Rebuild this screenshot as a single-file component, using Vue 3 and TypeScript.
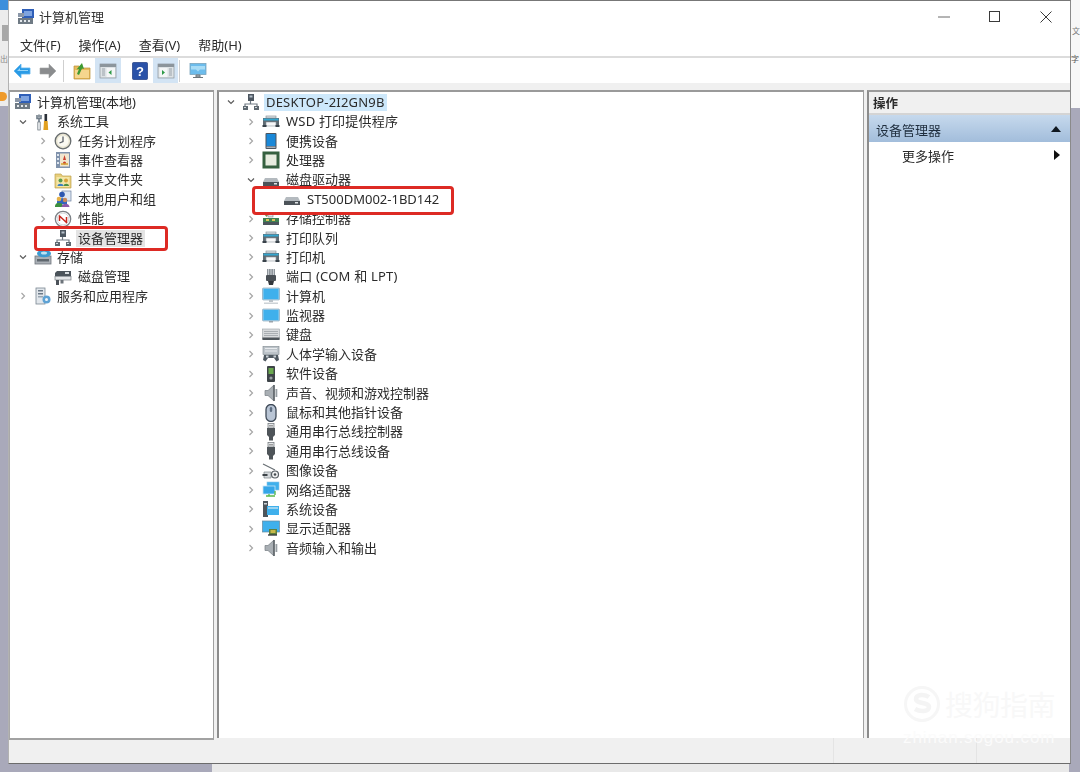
<script setup lang="ts">
interface Row { label: string; icon?: string; depth: number; caret?: 'right' | 'down' | 'none'; sel?: boolean }

const menus: string[] = ['文件(F)', '操作(A)', '查看(V)', '帮助(H)']

const isLatin = (s: string): boolean => /[A-Za-z]{3}/.test(s)

const leftRows: Row[] = [
  { label: '计算机管理(本地)', icon: 'mgmt', depth: 0, caret: 'none' },
  { label: '系统工具', icon: 'tools', depth: 1, caret: 'down' },
  { label: '任务计划程序', icon: 'clock', depth: 2, caret: 'right' },
  { label: '事件查看器', icon: 'event', depth: 2, caret: 'right' },
  { label: '共享文件夹', icon: 'share', depth: 2, caret: 'right' },
  { label: '本地用户和组', icon: 'users', depth: 2, caret: 'right' },
  { label: '性能', icon: 'perf', depth: 2, caret: 'right' },
  { label: '设备管理器', icon: 'devmgr', depth: 2, caret: 'none', sel: true },
  { label: '存储', icon: 'storage', depth: 1, caret: 'down' },
  { label: '磁盘管理', icon: 'diskmgr', depth: 2, caret: 'none' },
  { label: '服务和应用程序', icon: 'services', depth: 1, caret: 'right' },
]

const centerRows: Row[] = [
  { label: 'DESKTOP-2I2GN9B', icon: 'devmgr', depth: 0, caret: 'down', sel: true },
  { label: 'WSD 打印提供程序', icon: 'printer', depth: 1, caret: 'right' },
  { label: '便携设备', icon: 'portable', depth: 1, caret: 'right' },
  { label: '处理器', icon: 'cpu', depth: 1, caret: 'right' },
  { label: '磁盘驱动器', icon: 'drive', depth: 1, caret: 'down' },
  { label: 'ST500DM002-1BD142', icon: 'drive', depth: 2, caret: 'none' },
  { label: '存储控制器', icon: 'storctl', depth: 1, caret: 'right' },
  { label: '打印队列', icon: 'printer', depth: 1, caret: 'right' },
  { label: '打印机', icon: 'printer', depth: 1, caret: 'right' },
  { label: '端口 (COM 和 LPT)', icon: 'port', depth: 1, caret: 'right' },
  { label: '计算机', icon: 'computer', depth: 1, caret: 'right' },
  { label: '监视器', icon: 'monitor', depth: 1, caret: 'right' },
  { label: '键盘', icon: 'keyboard', depth: 1, caret: 'right' },
  { label: '人体学输入设备', icon: 'hid', depth: 1, caret: 'right' },
  { label: '软件设备', icon: 'software', depth: 1, caret: 'right' },
  { label: '声音、视频和游戏控制器', icon: 'sound', depth: 1, caret: 'right' },
  { label: '鼠标和其他指针设备', icon: 'mouse', depth: 1, caret: 'right' },
  { label: '通用串行总线控制器', icon: 'usb', depth: 1, caret: 'right' },
  { label: '通用串行总线设备', icon: 'usb', depth: 1, caret: 'right' },
  { label: '图像设备', icon: 'camera', depth: 1, caret: 'right' },
  { label: '网络适配器', icon: 'network', depth: 1, caret: 'right' },
  { label: '系统设备', icon: 'system', depth: 1, caret: 'right' },
  { label: '显示适配器', icon: 'display', depth: 1, caret: 'right' },
  { label: '音频输入和输出', icon: 'sound', depth: 1, caret: 'right' },
]
</script>

<template>
  <div class="screen">
    <div class="back-blue"></div>
    <div class="back-left"></div>
    <div class="back-right"></div>
    <div class="back-bottom"></div>
    <span class="back-orange"></span>
    <span class="back-grip"></span>
    <span class="back-t1">出</span>
    <span class="back-t2">文</span>
    <span class="back-t3">字</span>

    <svg class="defs" aria-hidden="true">
      <symbol id="mgmt" viewBox="0 0 18 18">
        <rect x="5" y="1" width="12" height="9" fill="#2f5fb8" />
        <rect x="7" y="3" width="8" height="5" fill="#7fa4e0" />
        <rect x="1" y="5" width="6" height="4" fill="#8b97a8" />
        <rect x="1" y="10" width="15" height="6" fill="#6f7a84" />
        <rect x="3" y="12" width="2" height="2" fill="#e4e8ec" />
        <rect x="7" y="12" width="2" height="2" fill="#e4e8ec" />
        <rect x="11" y="12" width="2" height="2" fill="#e4e8ec" />
      </symbol>
      <symbol id="tools" viewBox="0 0 18 18">
        <path d="M5 1.500v3M3 2v3.500h4V2M5 5.500V17" fill="none" stroke="#6f7c88" stroke-width="1.600" />
        <rect x="3.800" y="9" width="2.400" height="8" fill="#eef0f2" stroke="#67727c" stroke-width=".7" />
        <rect x="10.500" y="1" width="2.600" height="7" fill="#2b3038" />
        <path d="M10 8h3.600l.6 9h-4.800z" fill="#e1a020" />
      </symbol>
      <symbol id="clock" viewBox="0 0 18 18">
        <circle cx="9" cy="9" r="7.800" fill="#e9e5d3" stroke="#676c6e" stroke-width="1.300" />
        <circle cx="9" cy="9" r="5.600" fill="#fbfaf2" />
        <path d="M9 4.500V9.500L5.500 11" fill="none" stroke="#5b6068" stroke-width="1.300" />
      </symbol>
      <symbol id="event" viewBox="0 0 18 18">
        <rect x="2" y="1" width="14" height="16" fill="#8193ac" />
        <rect x="6" y="2.500" width="9" height="13" fill="#f1e6cf" />
        <rect x="3" y="3" width="2" height="2" fill="#dfe6ef" />
        <rect x="3" y="7" width="2" height="2" fill="#dfe6ef" />
        <rect x="3" y="11" width="2" height="2" fill="#dfe6ef" />
        <path d="M10.500 4l1.500 5h-3zM10.500 10.500a1.500 1.500 0 1 0 .01 0" fill="#c9402e" />
        <path d="M7 13h7" stroke="#d4a030" stroke-width="1.500" />
      </symbol>
      <symbol id="share" viewBox="0 0 18 18">
        <path d="M1 3h6l1.500 2H17v12H1z" fill="#e8cf7c" stroke="#bda04d" stroke-width=".7" />
        <rect x="2.500" y="6" width="13" height="10" fill="#f4e6a8" />
        <circle cx="6.500" cy="9.500" r="2" fill="#5b9b4d" />
        <path d="M3.500 15c0-3 6-3 6 0z" fill="#3c7fc4" />
        <circle cx="12" cy="9.500" r="2" fill="#d9a33c" />
        <path d="M9.500 15c0-3 5.500-3 5.500 0z" fill="#4d8f44" />
      </symbol>
      <symbol id="users" viewBox="0 0 18 18">
        <rect x="8" y="1" width="9" height="10" fill="#dde6f2" stroke="#6b7f9f" stroke-width=".7" />
        <circle cx="8" cy="4.500" r="2.800" fill="#2c57b0" />
        <path d="M3 12c0-5 10-5 10 0v2H3z" fill="#2f66c0" />
        <circle cx="5" cy="9" r="2.300" fill="#e7b24a" />
        <path d="M1 16c0-4.500 8-4.500 8 0v1H1z" fill="#3d8f3f" />
        <circle cx="11" cy="10" r="2.200" fill="#c98a5a" />
        <path d="M7.500 17c0-4.500 8-4.500 8 0z" fill="#8b5aa8" />
      </symbol>
      <symbol id="perf" viewBox="0 0 18 18">
        <circle cx="9" cy="9" r="7.700" fill="#fafafa" stroke="#7c8186" stroke-width="1.300" />
        <circle cx="9" cy="9" r="5.800" fill="#fff" stroke="#cfd3d6" stroke-width=".8" />
        <path d="M5 5.500l8 7.500M5.500 11V6.500M12.500 7v5.500" fill="none" stroke="#c8281e" stroke-width="1.500" />
      </symbol>
      <symbol id="devmgr" viewBox="0 0 18 18">
        <rect x="6" y="1" width="6" height="7" fill="#4c5660" />
        <rect x="7.500" y="2.500" width="3" height="2" fill="#b5c0ca" />
        <path d="M8.500 8v3M3 13v-2h12v2" fill="none" stroke="#707a84" stroke-width="1.200" />
        <rect x="1" y="13" width="5" height="4" fill="#5e6870" />
        <rect x="12" y="13" width="5" height="4" fill="#5e6870" />
        <rect x="2" y="14" width="2" height="1" fill="#cfd6dc" />
        <rect x="13" y="14" width="2" height="1" fill="#cfd6dc" />
      </symbol>
      <symbol id="storage" viewBox="0 0 18 18">
        <rect x="1" y="8" width="16" height="8" fill="#aab0b6" stroke="#70777d" stroke-width=".8" />
        <rect x="3" y="11" width="12" height="2.500" fill="#5f676e" />
        <ellipse cx="10" cy="5.500" rx="7" ry="3.800" fill="#3e9ad0" />
        <ellipse cx="10" cy="5" rx="3" ry="1.500" fill="#bfe3f4" />
      </symbol>
      <symbol id="diskmgr" viewBox="0 0 18 18">
        <path d="M3 3h14v5H1V5z" fill="#4b535a" />
        <rect x="11" y="4" width="4" height="2" fill="#d7dcdf" />
        <rect x="1" y="8.500" width="16" height="3.500" fill="#e4e6e8" stroke="#767c82" stroke-width=".7" />
        <rect x="2" y="12" width="3" height="5" fill="#4c5259" />
        <rect x="6.500" y="12" width="3" height="3.500" fill="#6c737a" />
      </symbol>
      <symbol id="services" viewBox="0 0 18 18">
        <rect x="2" y="1" width="9" height="16" fill="#e2e7ec" stroke="#7b8792" stroke-width=".8" />
        <rect x="4" y="3" width="5" height="1.500" fill="#6c7a88" />
        <rect x="4" y="6" width="5" height="1.500" fill="#6c7a88" />
        <rect x="4" y="9" width="5" height="1.500" fill="#9aa6b1" />
        <circle cx="12.500" cy="12.500" r="4" fill="#5ea2d4" />
        <circle cx="12.500" cy="12.500" r="1.500" fill="#f2f6fa" />
      </symbol>
      <symbol id="printer" viewBox="0 0 18 18">
        <path d="M1 5h16v7h-3V9H4v3H1z" fill="#5f6a72" />
        <rect x="1.500" y="5.500" width="15" height="2" fill="#33a6cf" />
        <rect x="4" y="3" width="10" height="2" fill="#dfe4e7" stroke="#7a848c" stroke-width=".6" />
        <rect x="4" y="9" width="10" height="4" fill="#f8f8f9" stroke="#8a939a" stroke-width=".6" />
        <rect x="0.500" y="12" width="4" height="2" fill="#39424a" />
        <rect x="13.500" y="12" width="4" height="2" fill="#39424a" />
      </symbol>
      <symbol id="portable" viewBox="0 0 18 18">
        <rect x="3.500" y="1" width="11" height="16" rx="1" fill="#4a5560" />
        <rect x="4.500" y="2" width="9" height="12" fill="#1a88d8" />
        <rect x="4.500" y="14.500" width="9" height="1.500" fill="#a9b2bb" />
      </symbol>
      <symbol id="cpu" viewBox="0 0 18 18">
        <rect x="0.500" y="0.500" width="17" height="17" fill="#35603f" />
        <rect x="3.500" y="3.500" width="11" height="11" fill="#e7ecdf" />
      </symbol>
      <symbol id="drive" viewBox="0 0 18 18">
        <path d="M3 7h12l2 4H1z" fill="#b4babf" />
        <rect x="1" y="11" width="16" height="4" fill="#4c5359" />
        <rect x="12" y="12" width="3" height="1.500" fill="#dfe3e6" />
      </symbol>
      <symbol id="storctl" viewBox="0 0 18 18">
        <path d="M3 2l3 3-1.500 2L2 4z" fill="#7d8f4a" />
        <rect x="1" y="8" width="16" height="4" fill="#3f7f52" />
        <rect x="1" y="12" width="16" height="3" fill="#4b555c" />
        <rect x="6" y="3" width="5" height="4" fill="#dce2e5" stroke="#7b858c" stroke-width=".6" />
        <rect x="4" y="9" width="3" height="2" fill="#d7c55c" />
        <rect x="10" y="9" width="3" height="2" fill="#d7c55c" />
      </symbol>
      <symbol id="port" viewBox="0 0 18 18">
        <rect x="5" y="1" width="8" height="6" fill="#8e959b" />
        <path d="M6.500 1v6M9 1v6M11.500 1v6" stroke="#d7dbde" stroke-width=".8" />
        <rect x="4" y="7" width="10" height="6" rx="1" fill="#4a5056" />
        <path d="M6 13h6l-1 4H7z" fill="#32373c" />
      </symbol>
      <symbol id="computer" viewBox="0 0 18 18">
        <rect x="0.500" y="1" width="17" height="12" rx="1" fill="#9fd2ef" stroke="#7a9ab0" stroke-width=".6" />
        <rect x="1.500" y="2" width="15" height="10" fill="#3fb0ec" />
        <path d="M7 13h4v2H7z" fill="#b9c1c7" />
        <rect x="2" y="15.500" width="14" height="1.500" fill="#ccd2d6" />
      </symbol>
      <symbol id="monitor" viewBox="0 0 18 18">
        <rect x="0.500" y="2" width="17" height="12" rx="1" fill="#9fd2ef" stroke="#7a9ab0" stroke-width=".6" />
        <rect x="1.500" y="3" width="15" height="10" fill="#3fb0ec" />
        <path d="M7 14h4v1.500H7z" fill="#9aa3aa" />
      </symbol>
      <symbol id="keyboard" viewBox="0 0 18 18">
        <rect x="0.500" y="3" width="17" height="10" fill="#d8dbdd" stroke="#9aa0a5" stroke-width=".6" />
        <path d="M2 5.500h14M2 7.500h14M2 9.500h14" stroke="#a9aeb2" stroke-width="1" />
        <rect x="0.500" y="11.500" width="17" height="2.500" fill="#4e555a" />
      </symbol>
      <symbol id="hid" viewBox="0 0 18 18">
        <rect x="1" y="1.500" width="16" height="8" fill="#bcc3c9" stroke="#7c858c" stroke-width=".6" />
        <path d="M3 3.500h12M3 6h12" stroke="#e8ebee" stroke-width="1" />
        <path d="M1 15l1-5h14l1 5-2.500 1.500L12 13H6l-2.500 3.500z" fill="#4f5961" />
        <rect x="4" y="10.500" width="2.500" height="2" fill="#c9d0d6" />
        <rect x="11.500" y="10.500" width="2.500" height="2" fill="#c9d0d6" />
      </symbol>
      <symbol id="software" viewBox="0 0 18 18">
        <rect x="5" y="1" width="8" height="16" rx="1" fill="#3e4448" />
        <rect x="6.500" y="3" width="5" height="6" fill="#6aa84f" />
        <circle cx="9" cy="13" r="1.600" fill="#9aa1a6" />
      </symbol>
      <symbol id="sound" viewBox="0 0 18 18">
        <path d="M3 6.500h3L12 1v16l-6-5.500H3z" fill="#a9afb4" stroke="#757c82" stroke-width=".7" />
        <path d="M12 1v16" stroke="#5e6469" stroke-width="1.600" />
        <rect x="13.500" y="5" width="1.800" height="8" fill="#969da2" />
      </symbol>
      <symbol id="mouse" viewBox="0 0 18 18">
        <rect x="4" y="0.500" width="10" height="17" rx="5" fill="#b9c5d5" stroke="#3f4a58" stroke-width="1.300" />
        <rect x="7.800" y="3" width="2.400" height="5" rx="1.200" fill="#5e6e82" />
      </symbol>
      <symbol id="usb" viewBox="0 0 18 18">
        <rect x="6" y="0.500" width="6" height="4.500" fill="#e4e6e8" stroke="#6b7176" stroke-width=".7" />
        <rect x="7.500" y="2" width="1" height="1.500" fill="#555" />
        <rect x="9.500" y="2" width="1" height="1.500" fill="#555" />
        <path d="M5 5h8v7l-2 2v3.500H7V14l-2-2z" fill="#4e5459" />
      </symbol>
      <symbol id="camera" viewBox="0 0 18 18">
        <path d="M1 2l12 6" stroke="#686f74" stroke-width="1.200" />
        <path d="M2 10h7v6H2z" fill="#d5d9dc" stroke="#7d8488" stroke-width=".7" />
        <rect x="0.500" y="12" width="5" height="2" fill="#3d4347" />
        <circle cx="13" cy="12.500" r="3.500" fill="#f0f1f2" stroke="#585f64" stroke-width="1.200" />
        <circle cx="13" cy="12.500" r="1.300" fill="#444a4f" />
      </symbol>
      <symbol id="network" viewBox="0 0 18 18">
        <rect x="5" y="1" width="12" height="8" fill="#3fb0ec" stroke="#8ac4e6" stroke-width=".6" />
        <rect x="1" y="5" width="12" height="8" fill="#35a6e8" stroke="#c8e4f4" stroke-width=".8" />
        <path d="M4 15h9M7 13v2M13 10v4" stroke="#58b848" stroke-width="1.300" fill="none" />
      </symbol>
      <symbol id="system" viewBox="0 0 18 18">
        <rect x="1" y="1" width="5" height="16" fill="#4d555b" />
        <rect x="2" y="3" width="3" height="1.500" fill="#cfd4d8" />
        <rect x="5" y="6" width="12" height="9" fill="#3fb0ec" />
        <rect x="6" y="7" width="10" height="2" fill="#9ad4f2" />
      </symbol>
      <symbol id="display" viewBox="0 0 18 18">
        <rect x="0.500" y="1" width="17" height="11" fill="#3fb0ec" stroke="#65899f" stroke-width=".7" />
        <rect x="7" y="9" width="8" height="6" fill="#5f7f3a" />
        <rect x="8.500" y="10" width="5" height="3" fill="#c7b94a" />
        <path d="M6 15h9" stroke="#3b3f42" stroke-width="1.400" />
      </symbol>
      <symbol id="back" viewBox="0 0 18 18">
        <path d="M1 9l7-7v4h9v6H8v4z" fill="#2a9be6" stroke="#5fb4ec" stroke-width=".8" />
        <path d="M4 9l3-3v2h8v1" fill="#96d5f8" />
      </symbol>
      <symbol id="forward" viewBox="0 0 18 18">
        <path d="M17 9l-7-7v4H1v6h9v4z" fill="#8a8c8e" stroke="#9fa1a3" stroke-width=".6" />
      </symbol>
      <symbol id="up" viewBox="0 0 18 18">
        <path d="M1 4h5l1 2h10v11H1z" fill="#e9b95a" stroke="#b89038" stroke-width=".7" />
        <rect x="2" y="8" width="14" height="8" fill="#f6d68e" />
        <path d="M4 12l2-5-2.500.5L9 1l2 6-2-.5L6 13z" fill="#3f9a32" />
      </symbol>
      <symbol id="treeh" viewBox="0 0 18 18">
        <rect x="1" y="2" width="16" height="14" fill="#dde2e5" stroke="#8a949c" stroke-width=".7" />
        <rect x="1" y="2" width="16" height="3" fill="#8c959c" />
        <rect x="7.500" y="6" width="8.500" height="9" fill="#f4f6f7" />
        <path d="M12.500 8l-3 2.500 3 2.500z" fill="#2f9a48" />
        <path d="M3 7h3M3 9h3M3 11h3M3 13h3" stroke="#8a949c" stroke-width=".8" />
      </symbol>
      <symbol id="acth" viewBox="0 0 18 18">
        <rect x="1" y="2" width="16" height="14" fill="#dde2e5" stroke="#8a949c" stroke-width=".7" />
        <rect x="1" y="2" width="16" height="3" fill="#8c959c" />
        <rect x="2.500" y="6" width="8" height="9" fill="#f4f6f7" />
        <path d="M5 8l3 2.500L5 13z" fill="#2f9a48" />
        <path d="M12 7h3M12 9h3M12 11h3M12 13h3" stroke="#8a949c" stroke-width=".8" />
      </symbol>
      <symbol id="monhelp" viewBox="0 0 18 18">
        <rect x="1" y="1.500" width="16" height="11" fill="#6cbcec" stroke="#7aa4bc" stroke-width=".8" />
        <path d="M2 4h14v3.500H11l-2 2-2-2H2z" fill="#a8dcf6" />
        <path d="M7 13h4v2H7zM4 15.500h10" stroke="#6d767c" stroke-width="1" fill="#aeb5ba" />
      </symbol>
    </svg>

    <div class="window">
      <header class="titlebar">
        <svg class="ic title-ic"><use href="#mgmt" /></svg>
        <span class="title">计算机管理</span>
        <div class="wincontrols">
          <svg class="ctl" width="12" height="12" viewBox="0 0 12 12"><path d="M0 6h12" stroke="#6a6a6a" stroke-width="1" /></svg>
          <svg class="ctl" width="12" height="12" viewBox="0 0 12 12"><rect x=".5" y=".5" width="10" height="10" fill="none" stroke="#3a3a3a" stroke-width="1" /></svg>
          <svg class="ctl" width="12" height="12" viewBox="0 0 12 12"><path d="M.5.500l11 11M11.500.500l-11 11" stroke="#3a3a3a" stroke-width="1" /></svg>
        </div>
      </header>

      <nav class="menubar">
        <span v-for="m in menus" :key="m" class="menu">{{ m }}</span>
      </nav>

      <div class="toolbar">
        <span class="tool t-back"><svg class="ic"><use href="#back" /></svg></span>
        <span class="tool t-fwd"><svg class="ic"><use href="#forward" /></svg></span>
        <span class="tsep"></span>
        <span class="tool t-up"><svg class="ic"><use href="#up" /></svg></span>
        <span class="tool active"><svg class="ic"><use href="#treeh" /></svg></span>
        <span class="tool t-help">
          <svg class="ic" viewBox="0 0 18 18">
            <rect x="1.500" y="0.500" width="15" height="17" rx="1" fill="#2a52a8" stroke="#1c3a80" stroke-width=".7" />
            <text x="9" y="14" font-family="Liberation Sans, sans-serif" font-size="13" font-weight="700" fill="#fff" text-anchor="middle">?</text>
          </svg>
        </span>
        <span class="tool active a2"><svg class="ic"><use href="#acth" /></svg></span>
        <span class="tsep s2"></span>
        <span class="tool t-mon"><svg class="ic"><use href="#monhelp" /></svg></span>
      </div>

      <main class="panes">
        <section class="pane left">
          <div v-for="r in leftRows" :key="r.label" class="row" :class="'d' + r.depth">
            <span v-if="r.depth > 0" class="caret">
              <svg v-if="r.caret === 'right'" width="8" height="8" viewBox="0 0 8 8"><path d="M2.500 1l3 3-3 3" fill="none" stroke="#a6a6a6" stroke-width="1.200" /></svg>
              <svg v-else-if="r.caret === 'down'" width="8" height="8" viewBox="0 0 8 8"><path d="M1 2.500l3 3 3-3" fill="none" stroke="#5c5c5c" stroke-width="1.200" /></svg>
            </span>
            <span class="ricon"><svg class="ic"><use :href="'#' + r.icon" /></svg></span>
            <span class="lbl" :class="{ grey: r.sel }">{{ r.label }}</span>
          </div>
        </section>

        <section class="pane center">
          <div v-for="r in centerRows" :key="r.label" class="row" :class="'c' + r.depth">
            <span class="caret">
              <svg v-if="r.caret === 'right'" width="8" height="8" viewBox="0 0 8 8"><path d="M2.500 1l3 3-3 3" fill="none" stroke="#a6a6a6" stroke-width="1.200" /></svg>
              <svg v-else-if="r.caret === 'down'" width="8" height="8" viewBox="0 0 8 8"><path d="M1 2.500l3 3 3-3" fill="none" stroke="#5c5c5c" stroke-width="1.200" /></svg>
            </span>
            <span class="ricon"><svg class="ic"><use :href="'#' + r.icon" /></svg></span>
            <span class="lbl" :class="{ blue: r.sel, latin: isLatin(r.label) }">{{ r.label }}</span>
          </div>
        </section>

        <aside class="pane right">
          <div class="act-head">操作</div>
          <div class="act-band">
            <span>设备管理器</span>
            <svg width="10" height="6" viewBox="0 0 10 6"><path d="M5 0l5 6H0z" fill="#101820" /></svg>
          </div>
          <div class="act-item">
            <span>更多操作</span>
            <svg width="6" height="10" viewBox="0 0 6 10"><path d="M0 0l6 5-6 5z" fill="#101010" /></svg>
          </div>
        </aside>
      </main>

      <footer class="status">
        <span class="st st1"></span>
        <span class="st st2"></span>
      </footer>
    </div>

    <div class="redbox box1"></div>
    <div class="redbox box2"></div>

    <div class="mark">
      <svg class="mark-logo" width="38" height="38" viewBox="0 0 38 38">
        <circle cx="19" cy="19" r="16.500" fill="none" stroke="#f6f6f6" stroke-width="3" />
        <path d="M26 12c-4-3-13-3-13 2 0 5 13 3 13 8 0 5-9 5-14 2" fill="none" stroke="#f4f4f4" stroke-width="4.500" />
      </svg>
      <span class="mark-cn">搜狗指南</span>
    </div>
    <span class="mark-url">zhinan.sogou.com</span>
  </div>
</template>

<style>
html, body { margin: 0; background: #a9a9ba; }
</style>

<style scoped>
.screen {
  position: relative;
  width: 1080px;
  height: 772px;
  overflow: hidden;
  background: #a9a9ba;
  font-family: "Noto Sans", "Noto Sans CJK SC", sans-serif;
  font-size: 13px;
  color: #2b2b2b;
}
.defs { position: absolute; width: 0; height: 0; overflow: hidden; }

.back-blue { position: absolute; left: 0; top: 0; width: 8px; height: 10px; background: #3d8fdc; }
.back-left { position: absolute; left: 0; top: 10px; width: 8px; height: 96px; background: #ececec; }
.back-right { position: absolute; right: 0; top: 0; width: 9px; height: 108px; background: #f7f7f7; }
.back-bottom { position: absolute; left: 212px; right: 11px; bottom: 0; height: 8px; background: #e9e9e9; }
.back-orange { position: absolute; left: 0; top: 92px; width: 7px; height: 9px; background: #ef9a2a; border-radius: 0 5px 5px 0; }
.back-grip { position: absolute; left: 2px; top: 25px; width: 6px; height: 16px; background: #a8a8a8; }
.back-t1 { position: absolute; left: 0; top: 54px; font-size: 8px; line-height: 10px; color: #888; }
.back-t2 { position: absolute; left: 1072px; top: 26px; font-size: 8px; line-height: 10px; color: #777; }
.back-t3 { position: absolute; left: 1071px; top: 54px; font-size: 8px; line-height: 10px; color: #555; }

.window {
  position: relative;
  margin-left: 8px;
  width: 1063px;
  height: 764px;
  box-sizing: border-box;
  display: flex;
  flex-direction: column;
  background: #fff;
  border-top: 1px solid #777;
  border-right: 1px solid #8a8a8a;
  border-bottom: 1px solid #6c6c6c;
  border-left: 1px solid #b2b2b2;
  filter: blur(0.45px);
}

.titlebar { height: 31px; display: flex; align-items: center; padding-left: 8px; flex: none; }
.ic { display: block; width: 18px; height: 18px; }
.title { margin-left: 4px; font-size: 13px; color: #333; }
.wincontrols { margin-left: auto; display: flex; margin-right: 18px; gap: 39px; }
.ctl { display: block; }

.menubar { height: 23px; padding-top: 1px; display: flex; align-items: center; padding-left: 11px; gap: 18px; border-bottom: 2px solid #dcdcdc; flex: none; }
.menu { font-size: 13px; color: #2c2c2c; }

.toolbar { height: 25px; display: flex; align-items: center; padding-left: 4px; background: #fff; flex: none; }
.tool { display: flex; align-items: center; justify-content: center; height: 25px; width: 18px; flex: none; }
.t-fwd { margin-left: 8px; }
.tsep { width: 1px; height: 22px; background: #cfcfcf; margin-left: 6px; flex: none; }
.s2 { margin-left: 1px; }
.t-up { margin-left: 9px; }
.active { width: 26px; background: #d3e4f4; margin-left: 4px; }
.t-help { margin-left: 10px; }
.a2 { width: 25px; margin-left: 4px; }
.t-mon { margin-left: 9px; }

.panes {
  flex: 1;
  min-height: 0;
  display: flex;
  gap: 3px;
  background: #f0f0f0;
  padding-top: 7px;
}
.pane {
  box-sizing: border-box;
  background: #fff;
  border-top: 2px solid #9a9a9a;
  border-left: 1px solid #a8a8a8;
  border-right: 1px solid #a0a0a0;
}
.left { width: 205px; padding-top: 0.600px; border-bottom: 2px solid #a2a2a2; margin-bottom: -2px; position: relative; z-index: 1; }
.center { width: 647px; padding-top: 0.600px; border-left: 2px solid #8c8c8c; }
.right { flex: 1; border-left: 2px solid #8c8c8c; border-right: none; }

.row { height: 19.400px; display: flex; align-items: center; white-space: nowrap; }
.caret { width: 16px; flex: none; display: flex; justify-content: center; align-items: center; }
.ricon { width: 20px; flex: none; display: flex; justify-content: center; }
.lbl { margin-left: 4px; padding: 0 2px; line-height: 17px; }
.d0 { padding-left: 3px; }
.d0 .lbl { margin-left: 2px; }
.d1 { padding-left: 5px; }
.d1 .ricon { margin-left: 2px; }
.d1 .lbl { margin-left: 2px; }
.d2 { padding-left: 25px; }
.d2 .ricon { margin-left: 2px; }
.d2 .lbl { margin-left: 3px; }
.grey { background: #e4e4e4; }
.blue { background: #cde8fb; }
.latin { letter-spacing: 0.200px; }
.c0 { padding-left: 4px; }
.c1 { padding-left: 24px; }
.c2 { padding-left: 45px; }
.center .ricon { margin-left: 2px; }
.center .lbl { margin-left: 3px; }

.act-head { height: 23px; box-sizing: border-box; line-height: 24px; background: #f0f0f0; padding-left: 4px; font-weight: 700; font-size: 12.500px; border-bottom: 2px solid #d4d4d4; }
.act-band {
  height: 27px;
  box-sizing: border-box;
  padding: 1px 9px 0 7px;
  display: flex;
  align-items: center;
  justify-content: space-between;
  background: linear-gradient(#c6d9ed, #a2bddb);
  color: #1f2e3e;
}
.act-item { height: 26px; display: flex; align-items: center; justify-content: space-between; padding: 0 10px 0 33px; }

.status { height: 25px; flex: none; background: #f0f0f0; position: relative; display: flex; justify-content: flex-end; }
.st { height: 100%; border-left: 1px solid #e4e4e4; box-sizing: border-box; }
.st1 { width: 143px; }
.st2 { width: 94px; }

.redbox { position: absolute; box-sizing: border-box; border: 3px solid #dd2a24; border-radius: 4px; filter: blur(0.4px); }
.box1 { left: 34px; top: 226px; width: 134px; height: 25px; }
.box2 { left: 252px; top: 186px; width: 202px; height: 29px; }

.mark { position: absolute; left: 903px; top: 684px; display: flex; align-items: center; gap: 4px; }
.mark-logo { display: block; }
.mark-cn { font-family: "Noto Sans CJK SC", sans-serif; font-size: 28px; color: #f8f8f8; letter-spacing: -0.500px; }
.mark-url { position: absolute; left: 903px; top: 728px; font-family: "Liberation Sans", sans-serif; font-size: 17px; letter-spacing: 0.900px; color: #fbfbfb; }
</style>
